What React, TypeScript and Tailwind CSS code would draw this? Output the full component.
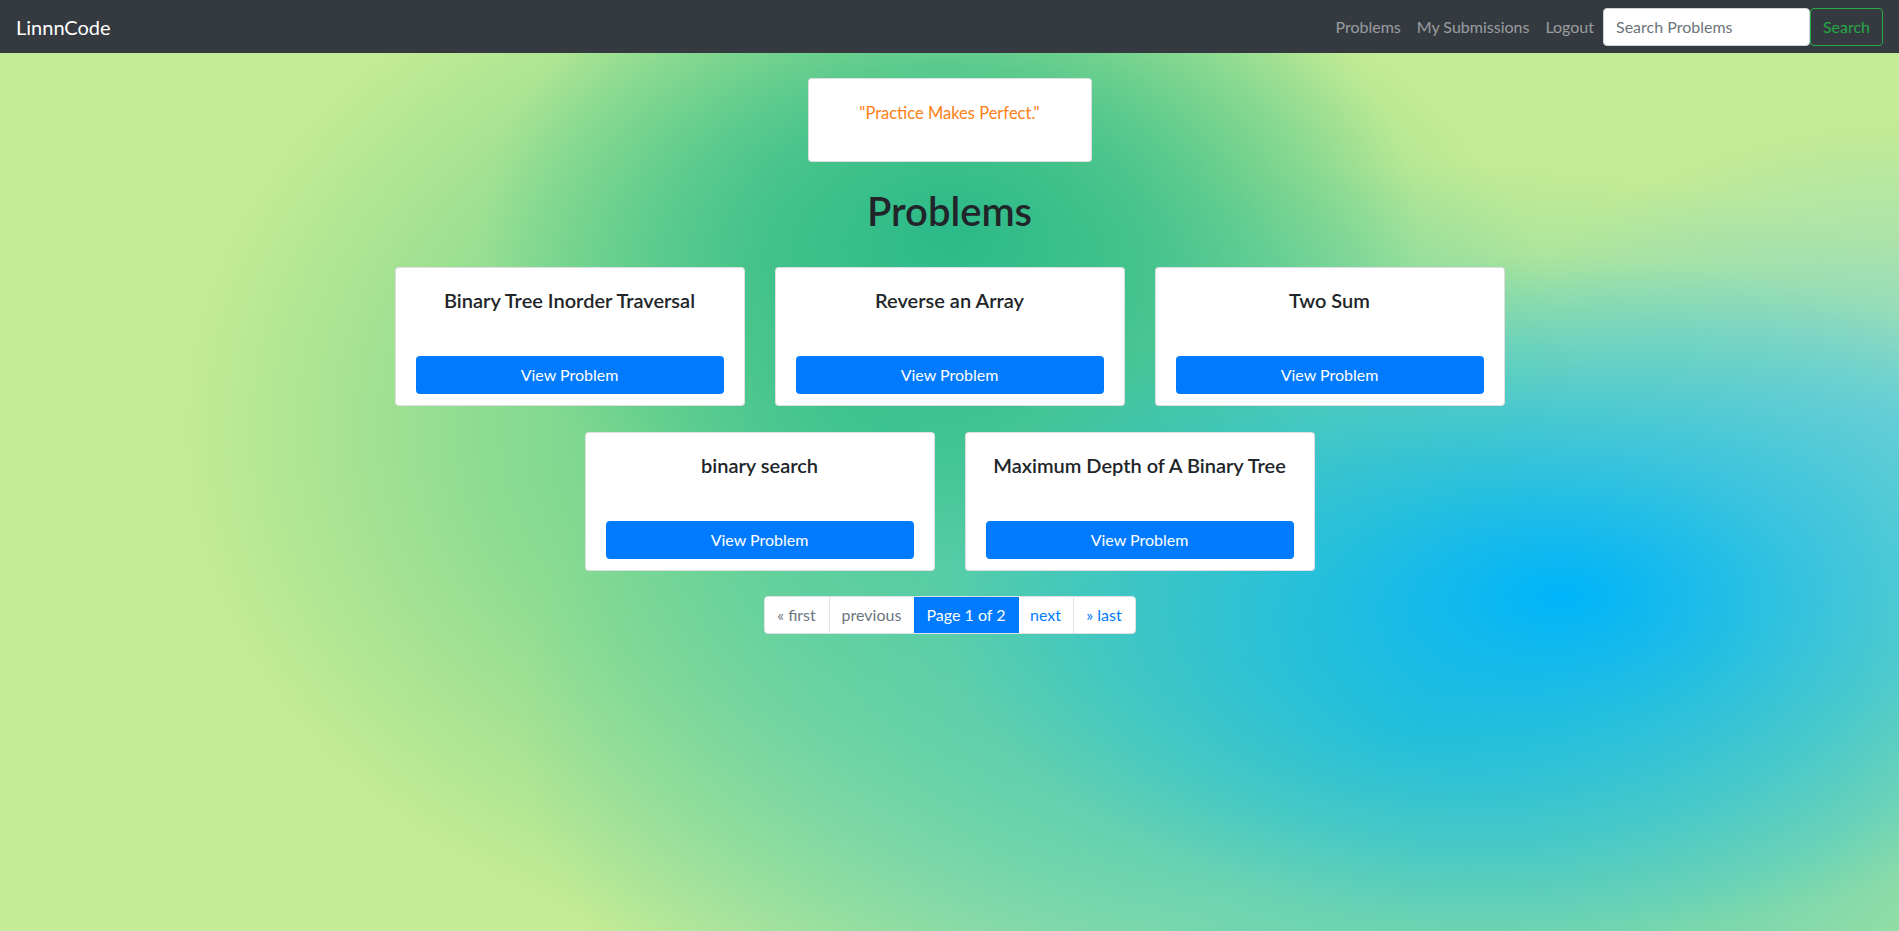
import React from 'react';

const problems = [
  'Binary Tree Inorder Traversal',
  'Reverse an Array',
  'Two Sum',
  'binary search',
  'Maximum Depth of A Binary Tree',
];

const ProblemCard = ({ title }: { title: string }) => (
  <div className="w-[350px] h-[139px] bg-white rounded-[4px] border border-black/[.125] px-5 pt-5 pb-[11px] flex flex-col">
    <h5 className="text-[20px] leading-6 font-semibold text-[#212529] text-center">{title}</h5>
    <a
      href="#"
      className="mt-[44px] h-[38px] rounded-[4px] bg-[#007bff] text-white text-[16px] flex items-center justify-center"
    >
      View Problem
    </a>
  </div>
);

export default function App() {
  return (
    <div className="min-h-[931px] font-['Segoe_UI','Lato',sans-serif] bg-[#c4eb95] [background-image:radial-gradient(620px_340px_at_1560px_595px,#00b4fa_0%,rgba(0,180,250,0.55)_40%,rgba(0,180,250,0)_100%),radial-gradient(470px_330px_at_950px_235px,#2cba89_0%,rgba(44,186,137,0.7)_40%,rgba(44,186,137,0)_100%),radial-gradient(420px_300px_at_1899px_420px,rgba(120,210,215,0.8)_0%,rgba(120,210,215,0)_100%),radial-gradient(900px_560px_at_1420px_720px,rgba(52,196,196,0.9)_0%,rgba(52,196,196,0.5)_50%,rgba(52,196,196,0)_100%),radial-gradient(700px_540px_at_880px_430px,rgba(70,200,140,0.9)_0%,rgba(70,200,140,0.45)_55%,rgba(70,200,140,0)_100%)]">
      <nav className="h-[53px] bg-[#343a40] flex items-center justify-between px-4">
        <a href="#" className="text-white text-[20px] leading-[30px]">
          LinnnCode
        </a>
        <div className="flex items-center">
          <ul className="flex text-[16px] text-white/50">
            <li><a href="#" className="px-2">Problems</a></li>
            <li><a href="#" className="px-2">My Submissions</a></li>
            <li><a href="#" className="px-2">Logout</a></li>
          </ul>
          <form className="flex ml-px">
            <input
              placeholder="Search Problems"
              className="w-[207px] h-[38px] rounded-[4px] border border-[#ced4da] bg-white px-3 text-[16px] text-[#495057] placeholder:text-[#6c757d] outline-none"
            />
            <button
              type="button"
              className="w-[73px] h-[38px] rounded-[4px] border border-[#28a745] text-[#28a745] text-[16px]"
            >
              Search
            </button>
          </form>
        </div>
      </nav>

      <main className="flex flex-col items-center">
        <div className="mt-[25px] w-[284px] h-[84px] bg-white rounded-[4px] border border-black/[.125] pt-[22px] text-center text-[16.5px] leading-6 text-[#fd7e14]">
          "Practice Makes Perfect."
        </div>

        <h1 className="mt-[25px] text-[40px] leading-[48px] font-semibold text-[#212529]">Problems</h1>

        <div className="mt-[32px] w-[1110px] flex flex-wrap justify-center gap-x-[30px] gap-y-[26px]">
          {problems.map((p) => (
            <ProblemCard key={p} title={p} />
          ))}
        </div>

        <div className="mt-[25px] flex h-[38px] text-[16px] bg-white rounded-[4px] border border-[#dee2e6] overflow-hidden">
          <span className="w-[64px] flex items-center justify-center text-[#6c757d]">« first</span>
          <span className="w-[85px] flex items-center justify-center text-[#6c757d] border-l border-[#dee2e6]">previous</span>
          <span className="w-[105px] flex items-center justify-center bg-[#007bff] text-white">Page 1 of 2</span>
          <a href="#" className="w-[54px] flex items-center justify-center text-[#007bff]">next</a>
          <a href="#" className="w-[62px] flex items-center justify-center text-[#007bff] border-l border-[#dee2e6]">» last</a>
        </div>
      </main>
    </div>
  );
}
